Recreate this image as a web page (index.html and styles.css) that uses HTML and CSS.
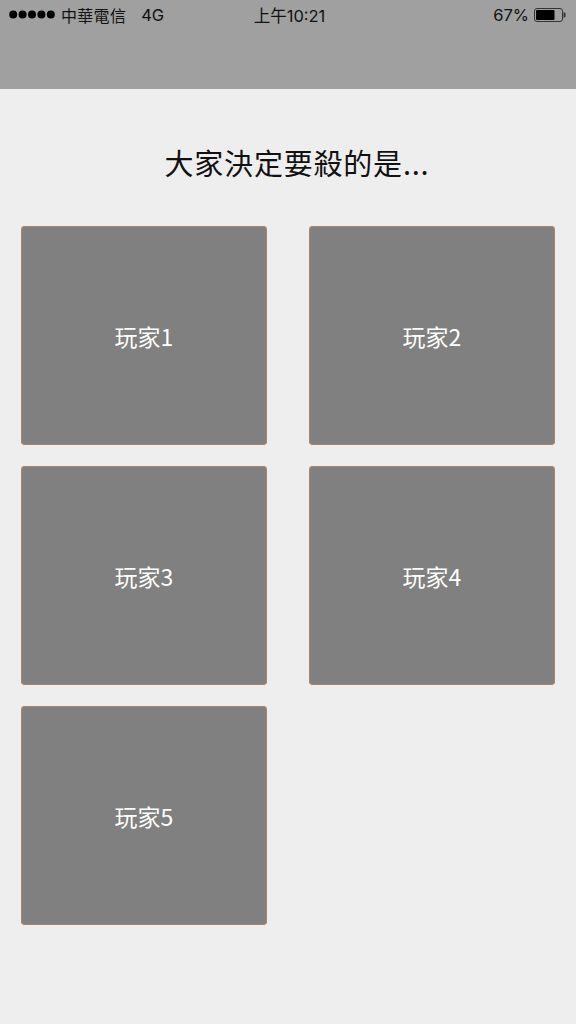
FILE: index.html
```html
<!DOCTYPE html>
<html lang="zh-Hant">
<head>
<meta charset="utf-8">
<title>大家決定要殺的是...</title>
<link rel="stylesheet" href="styles.css">
</head>
<body>
<header class="topbar">
  <div class="status">
    <div class="status-left">
      <svg class="signal" width="47" height="9" viewBox="0 0 47 9">
        <circle cx="4.2" cy="4.5" r="4" fill="#000"/>
        <circle cx="13.6" cy="4.5" r="4" fill="#000"/>
        <circle cx="23" cy="4.5" r="4" fill="#000"/>
        <circle cx="32.4" cy="4.5" r="4" fill="#000"/>
        <circle cx="41.8" cy="4.5" r="4" fill="#000"/>
      </svg>
      <span class="carrier">中華電信</span>
      <span class="net">4G</span>
    </div>
    <div class="status-time">上午10:21</div>
    <div class="status-right">
      <span class="pct">67%</span>
      <svg class="battery" width="32" height="14" viewBox="0 0 32 14">
        <rect x="0.5" y="0.5" width="28" height="13" rx="2.5" fill="none" stroke="#333" stroke-width="1"/>
        <rect x="2" y="2" width="18.5" height="10" rx="1" fill="#000"/>
        <path d="M29.5 4.5 h0.8 a1.2 1.2 0 0 1 1.2 1.2 v2.6 a1.2 1.2 0 0 1 -1.2 1.2 h-0.8 z" fill="#333"/>
      </svg>
    </div>
  </div>
</header>
<main class="content">
  <h1 class="title">大家決定要殺的是...</h1>
  <div class="grid">
    <button class="player">玩家1</button>
    <button class="player">玩家2</button>
    <button class="player">玩家3</button>
    <button class="player">玩家4</button>
    <button class="player">玩家5</button>
  </div>
</main>
</body>
</html>
```

FILE: styles.css
```css
html, body {
  margin: 0;
  padding: 0;
  background: #eeeeee;
}

body {
  width: 576px;
  min-height: 1024px;
  font-family: "Inter", "Noto Sans CJK TC", sans-serif;
}

.topbar {
  height: 89px;
  background: #a0a0a0;
  box-sizing: border-box;
}

.status {
  height: 29px;
  display: flex;
  align-items: center;
  justify-content: space-between;
  padding: 0 10px 0 9px;
  position: relative;
  font-size: 16px;
  color: #111;
}

.status-left {
  display: flex;
  align-items: center;
}

.signal {
  display: block;
  margin-right: 5px;
}

.carrier {
  font-family: "Noto Sans CJK TC", sans-serif;
  font-size: 16px;
  letter-spacing: 0.3px;
  margin-right: 15px;
}

.net {
  font-size: 16.5px;
}

.status-time {
  position: absolute;
  left: 3px;
  right: 0;
  text-align: center;
  font-size: 16.5px;
  font-family: "Inter", "Noto Sans CJK TC", sans-serif;
  pointer-events: none;
}

.status-right {
  display: flex;
  align-items: center;
  gap: 5px;
}

.pct {
  font-size: 16.5px;
}

.battery {
  display: block;
}

.content {
  padding: 55px 21px 0;
}

.title {
  margin: 0 0 46px;
  padding-left: 18px;
  height: 36px;
  line-height: 36px;
  text-align: center;
  font-family: "Noto Sans CJK TC", sans-serif;
  font-weight: 400;
  font-size: 29px;
  letter-spacing: 0.8px;
  color: #111;
}

.grid {
  display: grid;
  grid-template-columns: 246px 246px;
  grid-auto-rows: 219px;
  column-gap: 42px;
  row-gap: 21px;
}

.player {
  box-sizing: border-box;
  margin: 0;
  background: #808080;
  border: 1px solid #a8876c;
  border-radius: 3px;
  color: #ffffff;
  font-family: "Noto Sans CJK TC", sans-serif;
  font-size: 23px;
  display: flex;
  align-items: center;
  justify-content: center;
  padding: 0;
}
```
